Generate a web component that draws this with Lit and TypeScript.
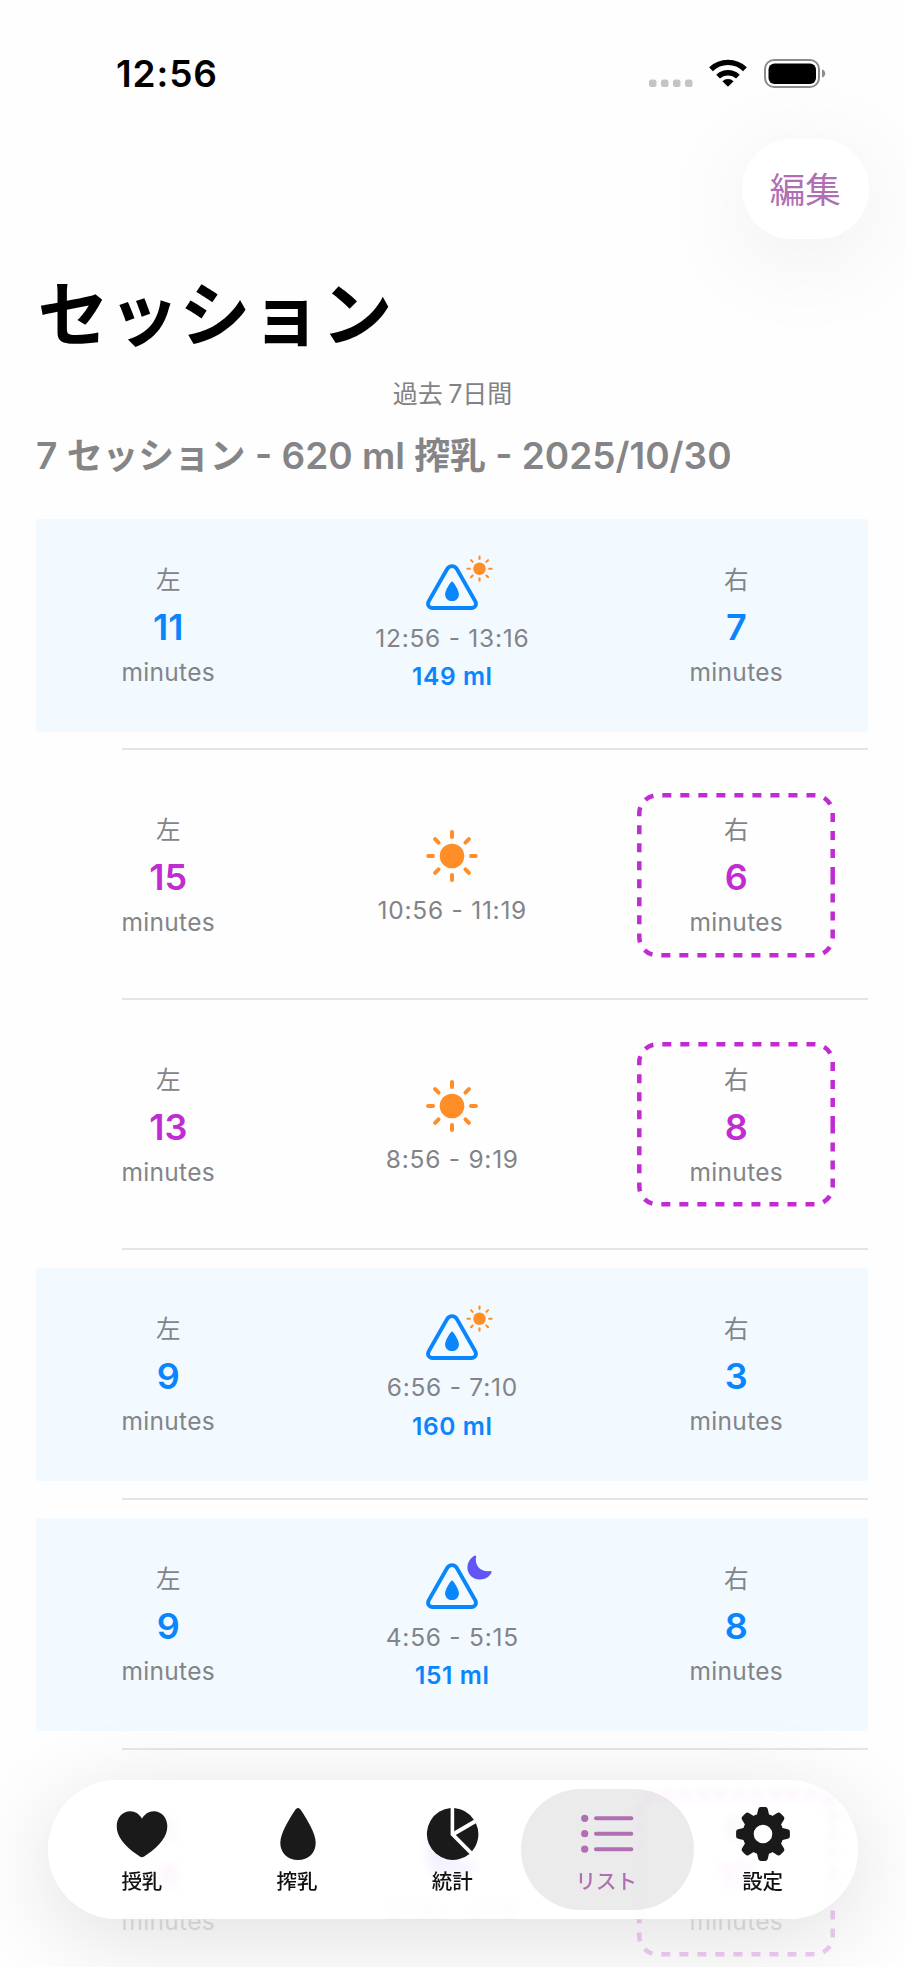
import { LitElement, html, svg, css, nothing } from "lit";
import { customElement, property } from "lit/decorators.js";

type Session = {
  left: string;
  right: string;
  time: string;
  volume?: string;
  night?: boolean;
};

const sessions: Session[] = [
  { left: "11", right: "7", time: "12:56 - 13:16", volume: "149 ml" },
  { left: "15", right: "6", time: "10:56 - 11:19" },
  { left: "13", right: "8", time: "8:56 - 9:19" },
  { left: "9", right: "3", time: "6:56 - 7:10", volume: "160 ml" },
  { left: "9", right: "8", time: "4:56 - 5:15", volume: "151 ml", night: true },
  { left: "8", right: "12", time: "2:56 - 3:16", night: true },
];

const sunRays = [0, 45, 90, 135, 180, 225, 270, 315];

const sunShape = svg`
  <circle cx="26" cy="26" r="12.3" fill="#ff8d28"></circle>
  ${sunRays.map(
    (a) => svg`<line x1="26" y1="2.1" x2="26" y2="7" transform="rotate(${a} 26 26)"
      stroke="#ff8d28" stroke-width="4" stroke-linecap="round"></line>`
  )}`;

const moonPath =
  "M9.300 1.200C8.900 0.200 7.700 0.400 6.600 1.200C2.600 4 0.400 8.200 0.400 12.600C0.400 19.600 6 24.800 13 24.800C18.200 24.800 22.600 22.200 24.600 18C25.200 16.600 24.400 15.900 23.200 16.100C14 17.600 7.200 10.600 9.300 1.200Z";

@customElement("session-row")
class SessionRow extends LitElement {
  @property({ attribute: false }) session!: Session;

  static styles = css`
    :host {
      display: block;
      height: 249.8px;
      box-sizing: border-box;
      padding-top: 18.3px;
    }
    .card {
      display: grid;
      grid-template-columns: 264px 1fr 264px;
      height: 213px;
    }
    .pump {
      background: #f2f9ff;
      --accent: #0a86fc;
    }
    .nurse {
      --accent: #c02bd2;
    }
    .side {
      display: grid;
      place-items: center;
    }
    .side > * {
      grid-area: 1 / 1;
    }
    .stack {
      display: flex;
      flex-direction: column;
      align-items: center;
      line-height: 30px;
      font-size: 24.5px;
      color: #828488;
      padding-top: 1.5px;
    }
    .label {
      height: 30px;
    }
    .num {
      font-size: 36px;
      font-weight: 600;
      line-height: 36px;
      margin: 14px 0 12px;
      color: var(--accent);
      height: 36px;
    }
    .unit {
      letter-spacing: 0.3px;
    }
    .mid {
      display: flex;
      flex-direction: column;
      align-items: center;
      font-size: 24.5px;
      line-height: 30px;
      color: #828488;
    }
    .pump .mid {
      padding-top: 35.4px;
    }
    .nurse .mid {
      padding-top: 61.6px;
    }
    .icon {
      display: block;
    }
    .time {
      letter-spacing: 0.75px;
    }
    .pump .time {
      margin-top: 8.6px;
    }
    .nurse .time {
      margin-top: 12.4px;
    }
    .volume {
      margin-top: 8.5px;
      font-weight: 600;
      letter-spacing: 0.6px;
      color: var(--accent);
    }
    .rule {
      margin: 16.7px 0 0 85.5px;
      height: 2px;
      background: #e5e5e6;
    }
  `;

  private renderIcon(s: Session) {
    if (!s.volume) {
      return s.night
        ? html`<svg class="icon" width="52" height="52" viewBox="0 0 25.5 25.5"><path d=${moonPath} fill="#6155f5"></path></svg>`
        : html`<svg class="icon" width="52" height="52" viewBox="0 0 52 52">${sunShape}</svg>`;
    }
    return html`<svg class="icon" width="84" height="60" viewBox="0 0 84 60">
      <path d="M37.300 14.800L18.900 47C16.800 50.700 18.800 54 22.600 54H61.400C65.200 54 67.200 50.700 65.100 47L46.700 14.800C44.600 11.300 39.400 11.300 37.300 14.800Z"
        fill="none" stroke="#0a86fc" stroke-width="3.8"></path>
      <path d="M42 27.200C43 27.200 48.900 35.900 48.900 40.200C48.900 44.200 46 47.100 42 47.100S35.100 44.200 35.100 40.200C35.100 35.900 41 27.200 42 27.200Z" fill="#0a86fc"></path>
      ${s.night
        ? svg`<path d=${moonPath} transform="translate(57 2) scale(.99)" fill="#6155f5"></path>`
        : svg`<g transform="translate(56.300 1.500) scale(.508)">${sunShape}</g>`}
    </svg>`;
  }

  private renderSide(label: string, value: string, dashed: boolean) {
    return html`<div class="side">
      ${dashed
        ? html`<svg class="icon" width="198" height="165" viewBox="0 0 198 165">
            <path d="M195.700 82.500V144.200A18 18 0 0 1 177.700 162.300H20.300A18 18 0 0 1 2.300 144.200V20.300A18 18 0 0 1 20.300 2.300H177.700A18 18 0 0 1 195.700 20.300V82.500"
              fill="none" stroke="#c02bd2" stroke-width="4.5" stroke-dasharray="9 9.02"></path>
          </svg>`
        : nothing}
      <div class="stack">
        <span class="label">${label}</span>
        <span class="num">${value}</span>
        <span class="unit">minutes</span>
      </div>
    </div>`;
  }

  render() {
    const s = this.session;
    return html`
      <div class="card ${s.volume ? "pump" : "nurse"}">
        ${this.renderSide("左", s.left, false)}
        <div class="mid">
          ${this.renderIcon(s)}
          <span class="time">${s.time}</span>
          ${s.volume ? html`<span class="volume">${s.volume}</span>` : nothing}
        </div>
        ${this.renderSide("右", s.right, !s.volume)}
      </div>
      <div class="rule"></div>
    `;
  }
}

const gearTeeth = [0, 45, 90, 135, 180, 225, 270, 315];

const tabs = [
  {
    label: "授乳",
    icon: svg`<path d="M27 50.300C25.800 50.300 24 49 22 47.600C9 38.800 1.700 29.300 1.700 19.300C1.700 10.800 7.500 4.300 15.200 4.300C20.400 4.300 24.600 7.300 27 11.700C29.400 7.300 33.600 4.300 38.800 4.300C46.500 4.300 52.300 10.800 52.300 19.300C52.300 29.300 45 38.800 32 47.600C30 49 28.200 50.300 27 50.300Z"></path>`,
  },
  {
    label: "搾乳",
    icon: svg`<path d="M28 1C29.300 1 30.200 2 31.200 3.500C37 12.400 45.700 26.500 45.700 35.700C45.700 46 38.400 53 28 53S10.300 46 10.300 35.700C10.300 26.500 19 12.400 24.800 3.500C25.800 2 26.700 1 28 1Z"></path>`,
  },
  {
    label: "統計",
    icon: svg`<g transform="translate(-.7 0)"><path d="M25.300 1V28L44.200 46.900A26 26 0 1 1 25.300 1Z"></path>
      <path d="M28.900 1A26 26 0 0 1 48.600 12.800L28.900 24.200Z"></path>
      <path d="M50.600 16.200A26 26 0 0 1 46.700 44.300L30.500 28Z"></path></g>`,
  },
  {
    label: "リスト",
    icon: svg`<g transform="translate(-1 0)">${[11.3, 26.7, 42.2].map(
      (y) => svg`<circle cx="4.700" cy=${y} r="3.600"></circle><rect x="14" y=${y - 2} width="39.300" height="4" rx="2"></rect>`
    )}</g>`,
  },
  {
    label: "設定",
    icon: svg`<path fill-rule="evenodd" d="M27 6.500A20.500 20.500 0 1 1 27 47.500A20.500 20.500 0 1 1 27 6.500ZM27 17.700A9.300 9.300 0 1 0 27 36.300A9.300 9.300 0 1 0 27 17.700Z"></path>
      ${gearTeeth.map(
        (a) => svg`<path d="M20.500 9.500L22.200 2.200Q22.600 .1 24.700 .1H29.300Q31.400 .1 31.800 2.200L33.500 9.500Z" transform="rotate(${a} 27 27)"></path>`
      )}`,
  },
];

@customElement("app-root")
class AppRoot extends LitElement {
  static styles = css`
    :host {
      display: block;
      position: relative;
      width: 905px;
      height: 1967px;
      overflow: hidden;
      background: #fefefe;
      font-family: Inter, "Noto Sans CJK JP", sans-serif;
      color: #000;
    }
    .status {
      display: flex;
      align-items: center;
      justify-content: space-between;
      height: 52px;
      padding: 47.5px 79px 0.5px 116px;
    }
    .clock {
      font-size: 37px;
      font-weight: 600;
      line-height: 52px;
      letter-spacing: 0.9px;
    }
    .signals {
      display: block;
    }
    .toolbar {
      display: flex;
      justify-content: flex-end;
      padding: 39px 36.5px 0 0;
    }
    .edit {
      width: 126.5px;
      height: 99.5px;
      box-sizing: border-box;
      padding-top: 4px;
      border-radius: 50px;
      background: #fff;
      box-shadow: 0 18px 100px rgba(0, 0, 0, 0.075);
      display: flex;
      align-items: center;
      justify-content: center;
      color: #b06fb3;
      font-size: 35.5px;
      line-height: 50px;
    }
    .title {
      margin: 23.3px 0 0 37.5px;
      font-size: 71px;
      line-height: 104px;
      font-weight: 700;
      height: 104px;
      white-space: nowrap;
    }
    .range {
      margin-top: 11.2px;
      height: 34px;
      line-height: 34px;
      font-size: 25px;
      text-align: center;
      word-spacing: -1.5px;
      color: #828284;
    }
    .summary {
      margin: 20px 0 0 36px;
      height: 50px;
      line-height: 50px;
      font-size: 37px;
      font-weight: 600;
      color: #858587;
      white-space: nowrap;
    }
    .summary span {
      font-size: 35.8px;
    }
    .list {
      margin: 19.5px 36.7px 0 36.3px;
    }
    .fade {
      position: absolute;
      left: 0;
      right: 0;
      bottom: 0;
      height: 237px;
      background: linear-gradient(rgba(254, 254, 254, 0), rgba(254, 254, 254, 0.1) 20%, rgba(254, 254, 254, 0.75) 70%, rgba(254, 254, 254, 0.76));
    }
    .tabbar {
      position: absolute;
      left: 47.5px;
      top: 1779.5px;
      width: 810px;
      height: 139.5px;
      box-sizing: border-box;
      padding: 0 17px;
      border-radius: 70px;
      background: rgba(255, 255, 255, 0.83);
      backdrop-filter: blur(5px);
      box-shadow: 0 18px 90px rgba(0, 0, 0, 0.12);
      display: grid;
      grid-template-columns: repeat(5, 155.2px);
      align-items: center;
      justify-content: center;
    }
    .tab {
      display: flex;
      flex-direction: column;
      align-items: center;
      margin: 0 -9px;
      height: 120.5px;
      box-sizing: border-box;
      padding-top: 18px;
      border-radius: 60px;
      font-size: 20.5px;
      font-weight: 500;
      line-height: 30px;
      color: #111;
      fill: #1a1a1a;
    }
    .tab span {
      margin: 6px 0.5px 0 0;
    }
    .tab.active span {
      margin-right: 3px;
    }
    .active {
      background: rgba(0, 0, 0, 0.078);
      color: #b06fb3;
      fill: #b06fb3;
    }
  `;

  render() {
    return html`
      <div class="status">
        <div class="clock">12:56</div>
        <svg class="signals" width="177" height="32" viewBox="0 0 177 32">
          <g fill="#c4c4c4">
            ${[0, 12, 24, 36].map((x) => svg`<rect x=${x} y="21.500" width="7.500" height="7.500" rx="2.500"></rect>`)}
          </g>
          <g transform="translate(79 29.200)">
            <path d="M0 -.5L-5.600 -6A8 8 0 0 1 5.600 -6Z"></path>
            <path d="M-9.900 -10.600A14.500 14.500 0 0 1 9.900 -10.600" fill="none" stroke="#000" stroke-width="5.400"></path>
            <path d="M-17 -18A24.700 24.700 0 0 1 17 -18" fill="none" stroke="#000" stroke-width="5.400"></path>
          </g>
          <rect x="116" y="2" width="54" height="27" rx="9" fill="none" stroke="#8c8c8c" stroke-width="2"></rect>
          <rect x="119.500" y="5.400" width="47.500" height="20.500" rx="6"></rect>
          <path d="M173 11.500C177.300 12.500 177.300 18.500 173 19.500Z" fill="#8c8c8c"></path>
        </svg>
      </div>
      <div class="toolbar"><div class="edit">編集</div></div>
      <div class="title">セッション</div>
      <div class="range">過去 7日間</div>
      <div class="summary">7 <span>セッション</span> - 620 ml <span>搾乳</span> - 2025/10/30</div>
      <div class="list">
        ${sessions.map((s) => html`<session-row .session=${s}></session-row>`)}
      </div>
      <div class="fade"></div>
      <div class="tabbar">
        ${tabs.map(
          (t, i) => html`<div class="tab ${i === 3 ? "active" : ""}">
            <svg width="54" height="54" viewBox="0 0 54 54">${t.icon}</svg>
            <span>${t.label}</span>
          </div>`
        )}
      </div>
    `;
  }
}
